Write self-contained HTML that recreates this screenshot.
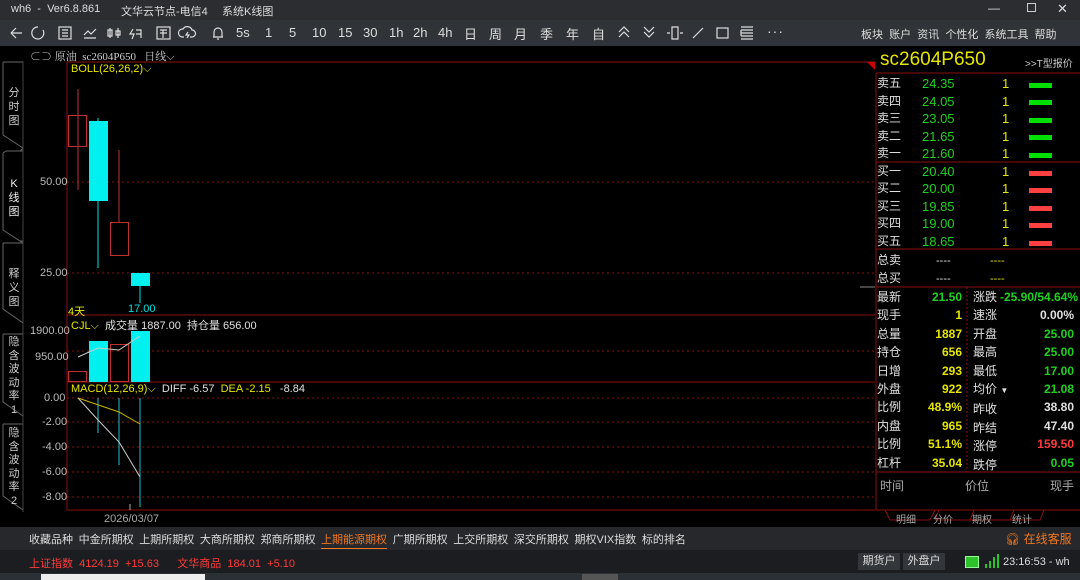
<!DOCTYPE html>
<html><head><meta charset="utf-8"><style>
*{margin:0;padding:0;box-sizing:border-box}
body{width:1080px;height:580px;background:#000;overflow:hidden;position:relative;font-family:"Liberation Sans","Noto Sans CJK SC",sans-serif;color:#ddd}
.a{position:absolute;white-space:nowrap}
#title{left:0;top:0;width:1080px;height:20px;background:#2b2d31;font-size:11px;color:#ddd}
#tb{left:0;top:20px;width:1080px;height:26px;background:#303337;font-size:13px;color:#ddd}
.r{color:#ddd;font-size:12px}
.g{color:#1fd11f}.y{color:#e6e600}.w{color:#e0e0e0}.rd{color:#ff3b3b}
.rp{font-size:12px}
</style></head><body>
<div id="title" class="a">
<span class="a" style="left:11px;top:3px">wh6 &nbsp;- &nbsp;Ver6.8.861</span>
<span class="a" style="left:121px;top:3px">文华云节点-电信4</span>
<span class="a" style="left:222px;top:3px">系统K线图</span>
<span class="a" style="left:988px;top:1px;font-size:12px">—</span>
<span class="a" style="left:1027px;top:3px;width:9px;height:9px;border:1px solid #ccc"></span>
<span class="a" style="left:1057px;top:1px;font-size:13px">✕</span>
</div>
<div id="tb" class="a">
<svg class="a" style="left:0;top:0" width="260" height="26" stroke="#ddd" fill="none" stroke-width="1.2">
<path d="M11 13h11M11 13l5-5M11 13l5 5"/>
<path d="M38 7a6 6 0 1 0 5 3"/>
<rect x="59" y="7" width="12" height="12"/><path d="M62 10h6M62 13h6M62 16h6"/>
<path d="M84 15l4-4 3 3 5-5M84 18h12"/>
<path d="M110 8v10M108 10h4v6h-4zM118 8v10M116 11h4v4h-4z"/>
<path d="M133 9l-3 5h4l-2 5M136 10h5v8M136 14h5"/>
<rect x="157" y="7" width="13" height="12"/><path d="M160 10h7M163 10v8M160 13h7"/>
<path d="M184 17h-2a4 4 0 0 1 1-8 5 5 0 0 1 9 1 3 3 0 0 1 0 7h-2M188 12l-2 3h3l-2 3"/>
<path d="M213 17h10M214 17v-5a4 4 0 0 1 8 0v5M217 19h2"/>
</svg>
<span class="a" style="left:236px;top:5px">5s</span>
<span class="a" style="left:265px;top:5px">1</span>
<span class="a" style="left:289px;top:5px">5</span>
<span class="a" style="left:312px;top:5px">10</span>
<span class="a" style="left:338px;top:5px">15</span>
<span class="a" style="left:363px;top:5px">30</span>
<span class="a" style="left:389px;top:5px">1h</span>
<span class="a" style="left:413px;top:5px">2h</span>
<span class="a" style="left:438px;top:5px">4h</span>
<span class="a" style="left:464px;top:4px">日</span>
<span class="a" style="left:489px;top:4px">周</span>
<span class="a" style="left:514px;top:4px">月</span>
<span class="a" style="left:540px;top:4px">季</span>
<span class="a" style="left:566px;top:4px">年</span>
<span class="a" style="left:592px;top:4px">自</span>
<svg class="a" style="left:610px;top:0" width="180" height="26" stroke="#ddd" fill="none" stroke-width="1.2">
<path d="M9 12l5-5 5 5M9 17l5-5 5 5"/>
<path d="M34 7l5 5 5-5M34 12l5 5 5-5"/>
<path d="M57 13h3M70 13h3M62 7h6v12h-6z"/>
<path d="M83 18l10-10"/>
<rect x="107" y="8" width="11" height="10"/>
<path d="M131 7h12M131 10h12M131 13h12M131 16h12M131 19h12M131 10v6"/>
</svg>
<span class="a" style="left:767px;top:3px;font-size:14px;letter-spacing:1px">···</span>
<span class="a r" style="left:861px;top:6px;font-size:11px">板块 &nbsp;账户 &nbsp;资讯 &nbsp;个性化 &nbsp;系统工具 &nbsp;帮助</span>
</div>

<div class="a" style="left:30px;top:48px;font-size:11px;color:#ccc;font-family:'Liberation Serif','Noto Serif CJK SC',serif">⊂⊃ 原油 &nbsp;sc2604P650 &nbsp;&nbsp;日线⌵</div>

<svg class="a" style="left:0;top:46px" width="1080" height="481">
<g stroke="#666" fill="none">
<path d="M3 16h20v86l-3 3v-0M3 16v73l20 13"/>
<path d="M3 107l3-2h17v90l-3-0M3 107v77l20 13"/>
<path d="M3 197h20v80M3 197v66l20 14"/>
<path d="M3 288h20v82M3 288v68l20 14"/>
<path d="M3 378h20v86M3 378v72l20 14"/>
</g>
<g stroke="#444"><path d="M23 16v450"/></g>
<g stroke="#8a1010" fill="none">
<path d="M67 16h808M67 16v448h808M67 269h808M67 336h808"/>
</g>
<path d="M867 16h8v8z" fill="#c00"/>
<g stroke="#8a1010" stroke-dasharray="2,3">
<path d="M67 136h808M67 227h808M67 305h808M67 352h808"/>
<path d="M67 352h808M67 376h808M67 401h808M67 426h808M67 451h808"/>
</g>
<path d="M860 241h15" stroke="#888"/>
<path d="M78 43v101M119 104v72" stroke="#c03030"/>
<rect x="68.5" y="69.5" width="18" height="31" fill="none" stroke="#c03030"/>
<rect x="110.5" y="176.5" width="18" height="33" fill="none" stroke="#c03030"/>
<path d="M98 72v150M140 240v17" stroke="#00e5e5"/>
<rect x="89" y="75" width="19" height="80" fill="#00f0f0"/>
<rect x="131" y="227" width="19" height="13" fill="#00f0f0"/>
<rect x="68.5" y="325.5" width="18" height="10" fill="none" stroke="#c03030"/>
<rect x="110.5" y="298.5" width="18" height="37" fill="none" stroke="#c03030"/>
<rect x="89" y="295" width="19" height="41" fill="#00f0f0"/>
<rect x="131" y="285" width="19" height="51" fill="#00f0f0"/>
<path d="M78 311l20-9 21 2 21-14" stroke="#ccc" fill="none"/>
<path d="M98 352v35M119 352v67M140 352v109" stroke="#20c0d0"/>
<path d="M78 352l20 22 21 22 21 35" stroke="#ccc" fill="none"/>
<path d="M78 352l41 14 21 12" stroke="#c8b400" fill="none"/>
<path d="M130 464v-6" stroke="#aaa"/>
<g stroke="#8a1010" fill="none">
<path d="M876 27v437M876 27h204M876 116h204M876 203h204M876 241h204M876 426h204M876 464h204"/>
</g>
<path d="M967 241v185" stroke="#8a1010" stroke-dasharray="2,2"/>
<path d="M885 464l5 10h40l5-10M935 474l4-10M935 474h35l4-10M970 474h40l4-10M1010 474h30l4-10" stroke="#8a1010" fill="none"/>
<g fill="#00e000"><rect x="1029" y="37" width="23" height="5"/><rect x="1029" y="54" width="23" height="5"/><rect x="1029" y="72" width="23" height="5"/><rect x="1029" y="89" width="23" height="5"/><rect x="1029" y="107" width="23" height="5"/></g>
<g fill="#ff4040"><rect x="1029" y="125" width="23" height="5"/><rect x="1029" y="142" width="23" height="5"/><rect x="1029" y="160" width="23" height="5"/><rect x="1029" y="177" width="23" height="5"/><rect x="1029" y="195" width="23" height="5"/></g>
</svg>

<div class="a" style="left:8px;top:86px;font-size:11px;color:#ccc;line-height:14px;width:12px;text-align:center">分<br>时<br>图</div>
<div class="a" style="left:8px;top:177px;font-size:11px;color:#eee;line-height:14px;width:12px;text-align:center">K<br>线<br>图</div>
<div class="a" style="left:8px;top:267px;font-size:11px;color:#ccc;line-height:14px;width:12px;text-align:center">释<br>义<br>图</div>
<div class="a" style="left:8px;top:336px;font-size:11px;color:#ccc;line-height:13.5px;width:12px;text-align:center">隐<br>含<br>波<br>动<br>率<br>1</div>
<div class="a" style="left:8px;top:427px;font-size:11px;color:#ccc;line-height:13.5px;width:12px;text-align:center">隐<br>含<br>波<br>动<br>率<br>2</div>

<div class="a" style="font-size:11px;color:#e6e600;left:71px;top:63px">BOLL(26,26,2)⌵</div>
<div class="a" style="font-size:11px;color:#bbb;left:40px;top:176px">50.00</div>
<div class="a" style="font-size:11px;color:#bbb;left:40px;top:267px">25.00</div>
<div class="a" style="font-size:11px;color:#e6e600;left:68px;top:303px">4天</div>
<div class="a" style="font-size:11px;color:#00e0e0;left:128px;top:303px">17.00</div>
<div class="a" style="font-size:11px;left:71px;top:317px"><span class="y">CJL⌵</span> &nbsp;<span class="w">成交量 1887.00 &nbsp;持仓量 656.00</span></div>
<div class="a" style="font-size:11px;color:#bbb;left:30px;top:325px">1900.00</div>
<div class="a" style="font-size:11px;color:#bbb;left:35px;top:351px">950.00</div>
<div class="a" style="font-size:11px;left:71px;top:383px"><span class="y">MACD(12,26,9)⌵</span> &nbsp;<span class="w">DIFF -6.57</span> &nbsp;<span class="y">DEA -2.15</span> &nbsp;&nbsp;<span class="w">-8.84</span></div>
<div class="a" style="font-size:11px;color:#bbb;left:44px;top:392px">0.00</div>
<div class="a" style="font-size:11px;color:#bbb;left:42px;top:416px">-2.00</div>
<div class="a" style="font-size:11px;color:#bbb;left:42px;top:441px">-4.00</div>
<div class="a" style="font-size:11px;color:#bbb;left:42px;top:466px">-6.00</div>
<div class="a" style="font-size:11px;color:#bbb;left:42px;top:491px">-8.00</div>
<div class="a" style="font-size:11px;color:#aaa;left:104px;top:513px">2026/03/07</div>

<div class="a" style="left:880px;top:49px;font-size:19px;color:#e6e600">sc2604P650</div>
<div class="a" style="left:1025px;top:55px;font-size:10px;color:#ccc">&gt;&gt;T型报价</div>
<div class="a rp" style="left:877px;top:75px;line-height:17.5px" >
<div class="w">卖五</div><div class="w">卖四</div><div class="w">卖三</div><div class="w">卖二</div><div class="w">卖一</div>
<div class="w">买一</div><div class="w">买二</div><div class="w">买三</div><div class="w">买四</div><div class="w">买五</div>
<div class="w" style="margin-top:2px">总卖</div><div class="w">总买</div></div>
<div class="a g" style="left:922px;top:75px;line-height:17.5px;font-size:13px">24.35<br>24.05<br>23.05<br>21.65<br>21.60<br>20.40<br>20.00<br>19.85<br>19.00<br>18.65</div>
<div class="a y" style="left:1002px;top:75px;line-height:17.5px;font-size:13px">1<br>1<br>1<br>1<br>1<br>1<br>1<br>1<br>1<br>1</div>
<div class="a w" style="left:936px;top:252px;line-height:18px;font-size:11px">----<br>----</div>
<div class="a y" style="left:990px;top:252px;line-height:18px;font-size:11px">----<br>----</div>

<div class="a w rp" style="left:877px;top:288px;line-height:18.4px">最新<br>现手<br>总量<br>持仓<br>日增<br>外盘<br>比例<br>内盘<br>比例<br>杠杆</div>
<div class="a" style="left:900px;top:288px;width:62px;text-align:right;line-height:18.4px;font-size:12px;font-weight:bold"><span class="g">21.50</span><br><span class="y">1</span><br><span class="y">1887</span><br><span class="y">656</span><br><span class="y">293</span><br><span class="y">922</span><br><span class="y">48.9%</span><br><span class="y">965</span><br><span class="y">51.1%</span><br><span class="y">35.04</span></div>
<div class="a w rp" style="left:973px;top:288px;line-height:18.4px">涨跌<br>速涨<br>开盘<br>最高<br>最低<br>均价 <span style="font-size:8px">▼</span><br>昨收<br>昨结<br>涨停<br>跌停</div>
<div class="a" style="left:1000px;top:288px;width:74px;text-align:right;line-height:18.4px;font-size:12px;font-weight:bold"><span class="g">-25.90/54.64%</span><br><span class="w">0.00%</span><br><span class="g">25.00</span><br><span class="g">25.00</span><br><span class="g">17.00</span><br><span class="g">21.08</span><br><span class="w">38.80</span><br><span class="w">47.40</span><br><span class="rd">159.50</span><br><span class="g">0.05</span></div>
<div class="a" style="left:880px;top:477px;font-size:12px;color:#aaa">时间</div>
<div class="a" style="left:965px;top:477px;font-size:12px;color:#aaa">价位</div>
<div class="a" style="left:1050px;top:477px;font-size:12px;color:#aaa">现手</div>
<div class="a" style="left:896px;top:511px;font-size:10px;color:#aaa">明细</div>
<div class="a" style="left:933px;top:511px;font-size:10px;color:#aaa">分价</div>
<div class="a" style="left:972px;top:511px;font-size:10px;color:#aaa">期权</div>
<div class="a" style="left:1012px;top:511px;font-size:10px;color:#aaa">统计</div>

<div class="a" style="left:0;top:527px;width:1080px;height:23px;background:#26282c"></div>
<div class="a" style="left:29px;top:531px;font-size:11px;color:#ddd;word-spacing:-0.25px">收藏品种 &nbsp;中金所期权 &nbsp;上期所期权 &nbsp;大商所期权 &nbsp;郑商所期权 &nbsp;<span style="color:#f07820">上期能源期权</span> &nbsp;广期所期权 &nbsp;上交所期权 &nbsp;深交所期权 &nbsp;期权VIX指数 &nbsp;标的排名</div>
<div class="a" style="left:321px;top:548px;width:66px;height:1px;background:#f07820"></div>
<div class="a" style="left:1005px;top:530px;font-size:12px;color:#f07820">🎧︎ 在线客服</div>
<div class="a" style="left:0;top:550px;width:1080px;height:23px;background:#1b1d20"></div>
<div class="a" style="left:29px;top:555px;font-size:11px;color:#ff3b3b">上证指数 &nbsp;4124.19 &nbsp;+15.63 &nbsp;&nbsp;&nbsp;&nbsp;&nbsp;文华商品 &nbsp;184.01 &nbsp;+5.10</div>
<div class="a" style="left:858px;top:553px;width:42px;height:17px;background:#33363a;font-size:11px;color:#ddd;text-align:center;line-height:17px">期货户</div>
<div class="a" style="left:903px;top:553px;width:42px;height:17px;background:#33363a;font-size:11px;color:#ddd;text-align:center;line-height:17px">外盘户</div>
<div class="a" style="left:965px;top:556px;width:14px;height:12px;background:#2cc22c;border:1px solid #9f9"></div>
<svg class="a" style="left:985px;top:553px" width="14" height="16"><g fill="#2cc22c"><rect x="0" y="11" width="2" height="4"/><rect x="4" y="8" width="2" height="7"/><rect x="8" y="4" width="2" height="11"/><rect x="12" y="1" width="2" height="14"/></g></svg>
<div class="a" style="left:1003px;top:556px;font-size:11px;color:#ddd">23:16:53 - wh</div>
<div class="a" style="left:0;top:573px;width:1080px;height:7px;background:#2a3035"></div>
<div class="a" style="left:41px;top:574px;width:164px;height:6px;background:#eee"></div>
<div class="a" style="left:582px;top:574px;width:36px;height:6px;background:#555"></div>
</body></html>
